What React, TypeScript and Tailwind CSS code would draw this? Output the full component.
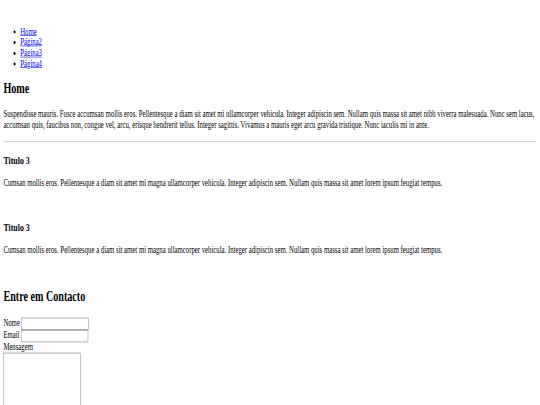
const navItems = ["Home", "Página2", "Página3", "Página4"];

const loremLong =
    "Suspendisse mauris. Fusce accumsan mollis eros. Pellentesque a diam sit amet mi ullamcorper vehicula. Integer adipiscin sem. Nullam quis massa sit amet nibh viverra malesuada. Nunc sem lacus, accumsan quis, faucibus non, congue vel, arcu, erisque hendrerit tellus. Integer sagittis. Vivamus a mauris eget arcu gravida tristique. Nunc iaculis mi in ante.";

const loremShort =
    "Cumsan mollis eros. Pellentesque a diam sit amet mi magna ullamcorper vehicula. Integer adipiscin sem. Nullam quis massa sit amet lorem ipsum feugiat tempus.";

function Section({ title }: { title: string }) {
    return (
        <section className="mb-[56px]">
            <h3 className="my-[18.72px] text-[18.72px] font-bold leading-[1.15]">{title}</h3>
            <p className="my-4">{loremShort}</p>
        </section>
    );
}

export default function App() {
    return (
        <div className="w-[540px] h-[405px] overflow-hidden bg-white">
            <div
                className="w-[1280px] h-[692px] origin-top-left scale-x-[0.421875] scale-y-[0.585] p-2 text-[16px] leading-[1.15] text-black"
                style={{ fontFamily: '"Liberation Serif", "Times New Roman", serif' }}
            >
                <header className="pt-[21px]">
                    <nav>
                        <ul className="my-4 pl-10 list-disc">
                            {navItems.map((item) => (
                                <li key={item}>
                                    <a href="#" className="text-[#0000ee] underline">
                                        {item}
                                    </a>
                                </li>
                            ))}
                        </ul>
                    </nav>
                </header>
                <main>
                    <h2 className="my-[19.92px] text-[24px] font-bold leading-[1.15]">Home</h2>
                    <p className="mt-4 mb-[18px]">{loremLong}</p>
                    <hr className="mt-[18px] mb-[21px] border-t border-b border-t-[#9a9a9a] border-b-[#eeeeee] h-0" />
                    <Section title="Titulo 3" />
                    <Section title="Titulo 3" />
                    <h2 className="mt-[19.92px] mb-[22px] text-[24px] font-bold leading-[1.15]">Entre em Contacto</h2>
                    <form>
                        <label htmlFor="nome">Nome</label>{" "}
                        <input id="nome" type="text" className="w-[159px] h-[21px] border border-[#767676] align-middle" />
                        <br />
                        <label htmlFor="email">Email</label>{" "}
                        <input id="email" type="email" className="w-[159px] h-[21px] border border-[#767676] align-middle" />
                        <br />
                        <label htmlFor="mensagem">Mensagem</label>
                        <br />
                        <textarea id="mensagem" className="w-[183px] h-[180px] border border-[#767676] resize-none align-top" />
                    </form>
                </main>
            </div>
        </div>
    );
}
